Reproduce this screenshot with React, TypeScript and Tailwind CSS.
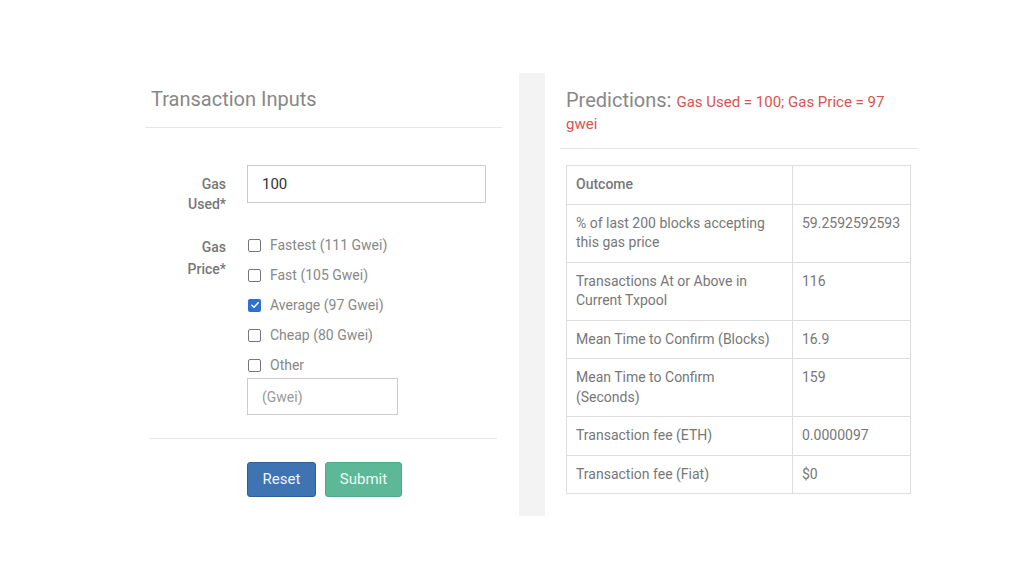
import React from 'react'

const options = [
  { label: 'Fastest (111 Gwei)', checked: false },
  { label: 'Fast (105 Gwei)', checked: false },
  { label: 'Average (97 Gwei)', checked: true },
  { label: 'Cheap (80 Gwei)', checked: false },
]

const rows: [string, string, boolean][] = [
  ['Outcome', '', true],
  ['% of last 200 blocks accepting this gas price', '59.2592592593', false],
  ['Transactions At or Above in Current Txpool', '116', false],
  ['Mean Time to Confirm (Blocks)', '16.9', false],
  ['Mean Time to Confirm (Seconds)', '159', false],
  ['Transaction fee (ETH)', '0.0000097', false],
  ['Transaction fee (Fiat)', '$0', false],
]

function Box({ checked }: { checked: boolean }) {
  if (checked) {
    return (
      <span className="flex h-[13px] w-[13px] items-center justify-center rounded-[2px] bg-[#2f6fd0]">
        <svg viewBox="0 0 12 12" className="h-[10px] w-[10px]">
          <path d="M2.2 6.3 L4.8 8.8 L9.8 3.2" fill="none" stroke="white" strokeWidth="1.8" strokeLinecap="round" strokeLinejoin="round" />
        </svg>
      </span>
    )
  }
  return <span className="h-[13px] w-[13px] rounded-[2px] border border-[#767676] bg-white" />
}

export default function App() {
  return (
    <div
      className="flex h-[566px] w-full bg-white pl-[145px] pt-[73px]"
      style={{ fontFamily: 'Roboto, "Liberation Sans", sans-serif' }}
    >
      {/* left: inputs */}
      <div className="w-[357px]">
        <h3 className="pl-[6px] pt-[12px] text-[20px] leading-[28px] text-[#888]">Transaction Inputs</h3>
        <div className="mt-[14px] border-t border-[#e6e6e6]" />

        <div className="mt-[37px] flex h-[38px] items-start">
          <div className="w-[81px] pt-[9px] text-right text-[14px] font-medium leading-[20px] text-[#777]">
            Gas
            <br />
            Used*
          </div>
          <input
            defaultValue="100"
            className="ml-[21px] h-[38px] w-[239px] border border-[#ccc] pl-[14px] text-[15px] text-[#333] outline-none"
          />
        </div>

        <div className="mt-[27px] flex">
          <div className="w-[81px] pt-[6px] text-right text-[14px] font-medium leading-[22px] text-[#777]">
            Gas
            <br />
            Price*
          </div>
          <div className="ml-[21px] flex flex-col">
            {options.map((o) => (
              <label key={o.label} className="flex h-[30px] items-center gap-[9px] pl-[1px] text-[14px] text-[#888]">
                <Box checked={o.checked} />
                {o.label}
              </label>
            ))}
            <label className="flex h-[28px] items-center gap-[9px] pl-[1px] pt-[2px] text-[14px] text-[#888]">
              <Box checked={false} />
              Other
            </label>
            <input
              placeholder="(Gwei)"
              className="h-[37px] w-[151px] border border-[#ccc] pl-[14px] text-[14px] text-[#333] outline-none placeholder:text-[#999]"
            />
          </div>
        </div>

        <div className="mx-[5px] mt-[23px] border-t border-[#e6e6e6]" />

        <div className="ml-[102px] mt-[23px] flex gap-[9px]">
          <button className="h-[35px] w-[69px] rounded-[3px] border border-[#2f5f95] bg-[#3f74b3] text-[15px] text-[#eef3fa]">
            Reset
          </button>
          <button className="h-[35px] w-[77px] rounded-[3px] border border-[#4fa886] bg-[#5cb896] text-[15px] text-[#eefaf4]">
            Submit
          </button>
        </div>
      </div>

      {/* divider strip */}
      <div className="ml-[17px] h-[443px] w-[26px] bg-[#f3f3f3]" />

      {/* right: predictions */}
      <div className="ml-[15px] w-[358px]">
        <h3 className="w-[335px] pl-[6px] pt-[16px] text-[20px] leading-[22px] text-[#888]">
          Predictions:{' '}
          <span className="text-[15px] leading-[16px] text-[#d9534f]">Gas Used = 100; Gas Price = 97 gwei</span>
        </h3>
        <div className="mt-[15px] border-t border-[#e6e6e6]" />

        <table className="ml-[6px] mt-[16px] w-[345px] border-collapse text-[14px] leading-[19.5px] text-[#777]">
          <tbody>
            {rows.map(([a, b, head]) => (
              <tr key={a}>
                <td className={`w-[226px] border border-[#ddd] py-[9px] pl-[9px] pr-[14px] align-top ${head ? 'font-medium' : ''}`}>{a}</td>
                <td className="border border-[#ddd] px-[9px] py-[9px] align-top">{b}</td>
              </tr>
            ))}
          </tbody>
        </table>
      </div>
    </div>
  )
}
